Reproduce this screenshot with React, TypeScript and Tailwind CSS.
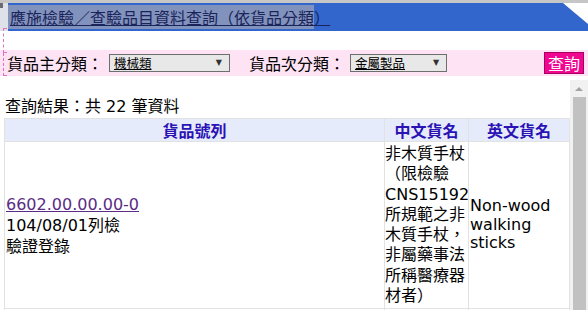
import React from "react";

export default function App() {
  return (
    <div className="relative w-[588px] h-[310px] overflow-hidden bg-white text-black font-['DejaVu_Sans','Noto_Sans_CJK_TC',sans-serif] text-[16px]">
      {/* top grey line */}
      <div className="h-[3px] bg-[#c6c6c6]" />
      {/* title bar */}
      <div className="flex h-[28px]">
        <div className="w-[8px] flex flex-col bg-[#dfe1e8]">
          <div className="h-[5px] w-[3px] bg-[#6a6a70]" />
        </div>
        <div className="flex-1 bg-[#3366cc] [clip-path:polygon(0_0,calc(100%-25px)_0,100%_21px,100%_100%,0_100%)] flex items-center">
          <span className="leading-[20px] underline text-[#1a245a] font-['Noto_Sans_CJK_TC',sans-serif]">
            <span className="bg-[#8192bd] pl-[2px]">應施檢驗／查驗品目資料查詢（依貨品分類</span>）
          </span>
        </div>
      </div>
      <div className="h-[19px]" />
      {/* filter bar */}
      <div className="h-[26px] bg-[#fde3f4] flex items-center pl-[7px] pr-[4px]">
        <span className="leading-[20px] font-['Noto_Sans_CJK_TC',sans-serif]">貨品主分類：</span>
        <div className="ml-[6px] w-[121px] h-[18px] border border-[#6e6e6e] bg-[#e8e8e8] flex items-center justify-between pl-[4px] pr-[7px]">
          <span className="text-[12.5px] leading-[14px] underline font-['Noto_Sans_CJK_TC',sans-serif]">機械類</span>
          <span className="text-[8px] leading-[8px] text-[#333]">▼</span>
        </div>
        <span className="ml-[19px] leading-[20px] font-['Noto_Sans_CJK_TC',sans-serif]">貨品次分類：</span>
        <div className="ml-[5px] w-[97px] h-[18px] border border-[#6e6e6e] bg-[#e8e8e8] flex items-center justify-between pl-[4px] pr-[7px]">
          <span className="text-[12.5px] leading-[14px] underline font-['Noto_Sans_CJK_TC',sans-serif]">金屬製品</span>
          <span className="text-[8px] leading-[8px] text-[#333]">▼</span>
        </div>
        <button className="ml-auto w-[40px] h-[22px] bg-[#f00690] border border-[#a8005e] text-white leading-[18px] font-['Noto_Sans_CJK_TC',sans-serif]">
          查詢
        </button>
      </div>
      {/* dashed pink marker */}
      <div className="absolute left-[3px] top-[28px] h-[25px] w-[4px] border-l border-t border-b border-dashed border-[#e070c0]" />
      <div className="absolute left-[3px] top-[53px] h-[23px] w-[4px] border-l border-b border-dashed border-[#e070c0]" />
      <div className="h-[4px]" />
      {/* results area */}
      <div className="flex h-[230px]">
        <div className="flex-1 overflow-hidden pt-[17px]">
          <div className="pl-[5px] leading-[20px] h-[21px]">查詢結果：共 22 筆資料</div>
          <table className="ml-[4px] w-[565px] border-collapse table-fixed">
            <colgroup>
              <col className="w-[380px]" />
              <col className="w-[84px]" />
              <col className="w-[101px]" />
            </colgroup>
            <thead>
              <tr className="bg-[#e5ebfa] h-[23px]">
                <th className="border border-[#e2e2e2] font-bold text-[#2a12b4] leading-[20px] text-center p-0 font-['Noto_Sans_CJK_TC',sans-serif]">貨品號列</th>
                <th className="border border-[#e2e2e2] font-bold text-[#2a12b4] leading-[20px] text-center p-0 font-['Noto_Sans_CJK_TC',sans-serif]">中文貨名</th>
                <th className="border border-[#e2e2e2] font-bold text-[#2a12b4] leading-[20px] text-center p-0 font-['Noto_Sans_CJK_TC',sans-serif]">英文貨名</th>
              </tr>
            </thead>
            <tbody>
              <tr>
                <td className="border border-[#e2e2e2] align-middle pl-[1px] py-[2px] leading-[21px]">
                  <a className="text-[#5b2c86] underline">6602.00.00.00-0</a>
                  <br />
                  104/08/01列檢
                  <br />
                  驗證登錄
                </td>
                <td className="border border-[#e2e2e2] align-middle px-0 py-[2px] leading-[20.25px] whitespace-nowrap overflow-visible">
                  非木質手杖
                  <br />
                  （限檢驗
                  <br />
                  CNS15192
                  <br />
                  所規範之非
                  <br />
                  木質手杖，
                  <br />
                  非屬藥事法
                  <br />
                  所稱醫療器
                  <br />
                  材者）
                </td>
                <td className="border border-[#e2e2e2] align-middle pl-[1px] py-[2px] leading-[18.5px]">
                  Non-wood
                  <br />
                  walking
                  <br />
                  sticks
                </td>
              </tr>
              <tr className="h-[20px]">
                <td className="border border-[#e2e2e2]" />
                <td className="border border-[#e2e2e2]" />
                <td className="border border-[#e2e2e2]" />
              </tr>
            </tbody>
          </table>
        </div>
        {/* scrollbar */}
        <div className="w-[18px] bg-[#f1f1f1] flex flex-col items-center">
          <div className="h-[17px] flex items-center justify-center">
            <div className="w-0 h-0 border-l-[4px] border-r-[4px] border-b-[4px] border-l-transparent border-r-transparent border-b-[#a3a3a3]" />
          </div>
          <div className="w-[13px] flex-1 bg-[#c1c1c1]" />
        </div>
      </div>
    </div>
  );
}
